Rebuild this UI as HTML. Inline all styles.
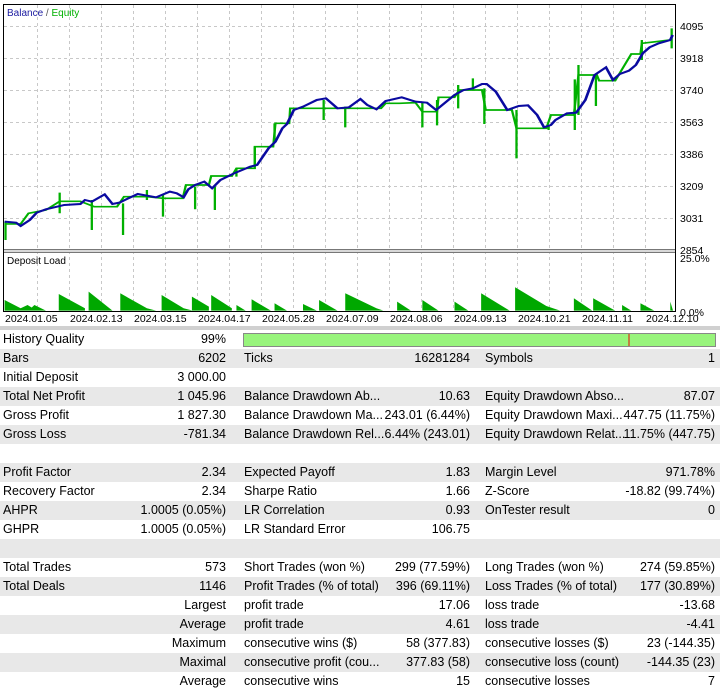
<!DOCTYPE html>
<html><head><meta charset="utf-8"><style>
*{margin:0;padding:0;box-sizing:border-box}
body{width:720px;height:692px;background:#fff;font-family:"Liberation Sans",Arial,sans-serif;overflow:hidden;position:relative}
.tbl{position:absolute;left:0;top:330px;width:720px}
.r{height:19px;position:relative;font-size:12.5px;line-height:19px;color:#000}
.r:nth-child(even){background:#e8e8e8}
.r span{position:absolute;white-space:nowrap}
.l1{left:3px}.v1{right:494px;text-align:right}
.l2{left:244px}.v2{right:250px;text-align:right}
.l3{left:485px}.v3{right:5px;text-align:right}
</style></head><body>
<svg width="720" height="330" style="position:absolute;left:0;top:0" font-family="Liberation Sans, Arial, sans-serif">
<rect x="0" y="0" width="720" height="330" fill="#fff"/>
<g stroke="#c8c8c8" stroke-dasharray="3,3" stroke-width="1">
<line x1="4" y1="26.5" x2="675" y2="26.5"/><line x1="4" y1="58.5" x2="675" y2="58.5"/><line x1="4" y1="90.5" x2="675" y2="90.5"/><line x1="4" y1="122.5" x2="675" y2="122.5"/><line x1="4" y1="154.5" x2="675" y2="154.5"/><line x1="4" y1="186.5" x2="675" y2="186.5"/><line x1="4" y1="218.5" x2="675" y2="218.5"/>
<g id="vg"><line x1="37.5" y1="5" x2="37.5" y2="311"/><line x1="69.5" y1="5" x2="69.5" y2="311"/><line x1="101.5" y1="5" x2="101.5" y2="311"/><line x1="133.5" y1="5" x2="133.5" y2="311"/><line x1="165.5" y1="5" x2="165.5" y2="311"/><line x1="197.5" y1="5" x2="197.5" y2="311"/><line x1="229.5" y1="5" x2="229.5" y2="311"/><line x1="261.5" y1="5" x2="261.5" y2="311"/><line x1="293.5" y1="5" x2="293.5" y2="311"/><line x1="325.5" y1="5" x2="325.5" y2="311"/><line x1="357.5" y1="5" x2="357.5" y2="311"/><line x1="389.5" y1="5" x2="389.5" y2="311"/><line x1="421.5" y1="5" x2="421.5" y2="311"/><line x1="453.5" y1="5" x2="453.5" y2="311"/><line x1="485.5" y1="5" x2="485.5" y2="311"/><line x1="517.5" y1="5" x2="517.5" y2="311"/><line x1="549.5" y1="5" x2="549.5" y2="311"/><line x1="581.5" y1="5" x2="581.5" y2="311"/><line x1="613.5" y1="5" x2="613.5" y2="311"/><line x1="645.5" y1="5" x2="645.5" y2="311"/></g>
</g>
<g transform="scale(0.4591,0.3333)" fill="none">
<g stroke="#00b000" stroke-width="5">
<polyline points="10,672 45,672 62,640 100,630 130,604 175,604 205,620 255,620 270,590 320,590 355,595 398,595 405,555 455,555 460,528 505,528 515,505 555,505 555,440 595,440 600,370 630,370 632,325 700,325 760,325 830,325 840,310 870,310 905,308 920,335 952,335 955,292 990,292 1000,270 1050,270 1058,330 1115,330 1125,385 1190,385 1200,345 1250,345 1260,225 1300,225 1305,242 1340,242 1375,162 1395,162 1398,130 1460,120"/>
<path d="M12 665V720M130 578V640M200 600V690M268 610V705M355 585V650M425 560V628M468 560V630M515 505V530M555 440V500M705 300V360M752 320V382M920 305V382M952 300V376M998 255V325M1030 235V270M1055 265V372M1125 330V475M1195 378V390M1252 238V390M1260 195V345M1298 225V318M1398 120V180M1463 85V145M320 570V600M598 370V420"/>
</g>
<polyline stroke="#0a0aa0" stroke-width="6" points="10,665 35,668 45,678 65,660 80,638 100,628 140,615 175,612 185,600 200,605 228,583 245,612 260,608 275,598 300,582 340,592 370,575 385,580 400,592 410,568 425,555 445,545 462,565 480,540 510,520 545,500 560,495 585,445 600,425 615,385 625,372 640,330 660,320 690,300 710,295 735,325 760,322 785,297 800,315 820,328 840,303 875,292 905,305 930,308 950,330 990,285 1010,270 1030,265 1050,252 1060,252 1080,275 1105,330 1130,318 1150,316 1170,345 1185,382 1200,375 1210,360 1235,340 1255,338 1275,300 1295,225 1320,202 1335,240 1350,222 1370,212 1385,195 1400,160 1415,142 1435,130 1460,120 1465,105"/>
<path fill="#00a800" stroke="none" d="M10 932V900L45 925L60 915L80 932ZM62 932L75 915L100 932ZM128 932V882L185 925V932ZM193 932V875L245 932ZM262 932V880L320 925L340 932ZM352 932V885L400 925L420 932ZM418 932V890L455 920V932ZM460 932V885L505 925V932ZM515 932V915L535 932ZM548 932V898L590 932ZM598 932V910L625 932ZM695 932V900L735 932ZM752 932V880L820 925L835 932ZM865 932V905L895 932ZM920 932V900L955 932ZM990 932V905L1020 932ZM1048 932V880L1110 932ZM1122 932V862L1190 918L1220 932ZM1250 932V895L1290 932ZM1292 932V895L1340 932ZM1395 932V910L1425 932ZM1460 932V905L1466 932ZM1355 932V915L1375 932ZM660 932V912L690 932ZM160 932V918L180 932Z"/>
</g>
<rect x="3.5" y="4.5" width="672" height="307" fill="none" stroke="#000"/>
<line x1="4" y1="249.5" x2="675" y2="249.5" stroke="#777"/>
<line x1="4" y1="252.5" x2="675" y2="252.5" stroke="#777"/>
<rect x="4" y="250" width="671" height="2" fill="#d8d8d8"/>
<text x="7" y="16" font-size="10"><tspan fill="#1a1aa0">Balance</tspan><tspan fill="#555"> / </tspan><tspan fill="#00b000">Equity</tspan></text>
<text x="7" y="264" font-size="10" fill="#000">Deposit Load</text>
<g font-size="10.5" fill="#000">
<text x="680" y="30">4095</text><text x="680" y="62">3918</text><text x="680" y="94">3740</text><text x="680" y="126">3563</text><text x="680" y="158">3386</text><text x="680" y="190">3209</text><text x="680" y="222">3031</text><text x="680" y="254">2854</text>
<text x="680" y="262">25.0%</text><text x="680" y="316">0.0%</text>
<text x="5" y="322">2024.01.05</text><text x="70" y="322">2024.02.13</text><text x="134" y="322">2024.03.15</text><text x="198" y="322">2024.04.17</text><text x="262" y="322">2024.05.28</text><text x="326" y="322">2024.07.09</text><text x="390" y="322">2024.08.06</text><text x="454" y="322">2024.09.13</text><text x="518" y="322">2024.10.21</text><text x="582" y="322">2024.11.11</text><text x="646" y="322">2024.12.10</text>
</g>
<rect x="0" y="326" width="720" height="4" fill="#d0d0d0"/>
</svg>
<div class="tbl">
<div class="r"><span class="l1">History Quality</span><span class="v1">99%</span>
<div style="position:absolute;left:243px;top:3px;width:473px;height:14px;background:#98f47c;border:1px solid #888"><div style="position:absolute;left:384px;top:0;width:2px;height:12px;background:#c08040"></div></div></div>
<div class="r"><span class="l1">Bars</span><span class="v1">6202</span><span class="l2">Ticks</span><span class="v2">16281284</span><span class="l3">Symbols</span><span class="v3">1</span></div>
<div class="r"><span class="l1">Initial Deposit</span><span class="v1">3 000.00</span></div>
<div class="r"><span class="l1">Total Net Profit</span><span class="v1">1 045.96</span><span class="l2">Balance Drawdown Ab...</span><span class="v2">10.63</span><span class="l3">Equity Drawdown Abso...</span><span class="v3">87.07</span></div>
<div class="r"><span class="l1">Gross Profit</span><span class="v1">1 827.30</span><span class="l2">Balance Drawdown Ma...</span><span class="v2">243.01 (6.44%)</span><span class="l3">Equity Drawdown Maxi...</span><span class="v3">447.75 (11.75%)</span></div>
<div class="r"><span class="l1">Gross Loss</span><span class="v1">-781.34</span><span class="l2">Balance Drawdown Rel...</span><span class="v2">6.44% (243.01)</span><span class="l3">Equity Drawdown Relat...</span><span class="v3">11.75% (447.75)</span></div>
<div class="r"></div>
<div class="r"><span class="l1">Profit Factor</span><span class="v1">2.34</span><span class="l2">Expected Payoff</span><span class="v2">1.83</span><span class="l3">Margin Level</span><span class="v3">971.78%</span></div>
<div class="r"><span class="l1">Recovery Factor</span><span class="v1">2.34</span><span class="l2">Sharpe Ratio</span><span class="v2">1.66</span><span class="l3">Z-Score</span><span class="v3">-18.82 (99.74%)</span></div>
<div class="r"><span class="l1">AHPR</span><span class="v1">1.0005 (0.05%)</span><span class="l2">LR Correlation</span><span class="v2">0.93</span><span class="l3">OnTester result</span><span class="v3">0</span></div>
<div class="r"><span class="l1">GHPR</span><span class="v1">1.0005 (0.05%)</span><span class="l2">LR Standard Error</span><span class="v2">106.75</span></div>
<div class="r"></div>
<div class="r"><span class="l1">Total Trades</span><span class="v1">573</span><span class="l2">Short Trades (won %)</span><span class="v2">299 (77.59%)</span><span class="l3">Long Trades (won %)</span><span class="v3">274 (59.85%)</span></div>
<div class="r"><span class="l1">Total Deals</span><span class="v1">1146</span><span class="l2">Profit Trades (% of total)</span><span class="v2">396 (69.11%)</span><span class="l3">Loss Trades (% of total)</span><span class="v3">177 (30.89%)</span></div>
<div class="r"><span class="v1">Largest</span><span class="l2">profit trade</span><span class="v2">17.06</span><span class="l3">loss trade</span><span class="v3">-13.68</span></div>
<div class="r"><span class="v1">Average</span><span class="l2">profit trade</span><span class="v2">4.61</span><span class="l3">loss trade</span><span class="v3">-4.41</span></div>
<div class="r"><span class="v1">Maximum</span><span class="l2">consecutive wins ($)</span><span class="v2">58 (377.83)</span><span class="l3">consecutive losses ($)</span><span class="v3">23 (-144.35)</span></div>
<div class="r"><span class="v1">Maximal</span><span class="l2">consecutive profit (cou...</span><span class="v2">377.83 (58)</span><span class="l3">consecutive loss (count)</span><span class="v3">-144.35 (23)</span></div>
<div class="r"><span class="v1">Average</span><span class="l2">consecutive wins</span><span class="v2">15</span><span class="l3">consecutive losses</span><span class="v3">7</span></div>
</div>
</body></html>
